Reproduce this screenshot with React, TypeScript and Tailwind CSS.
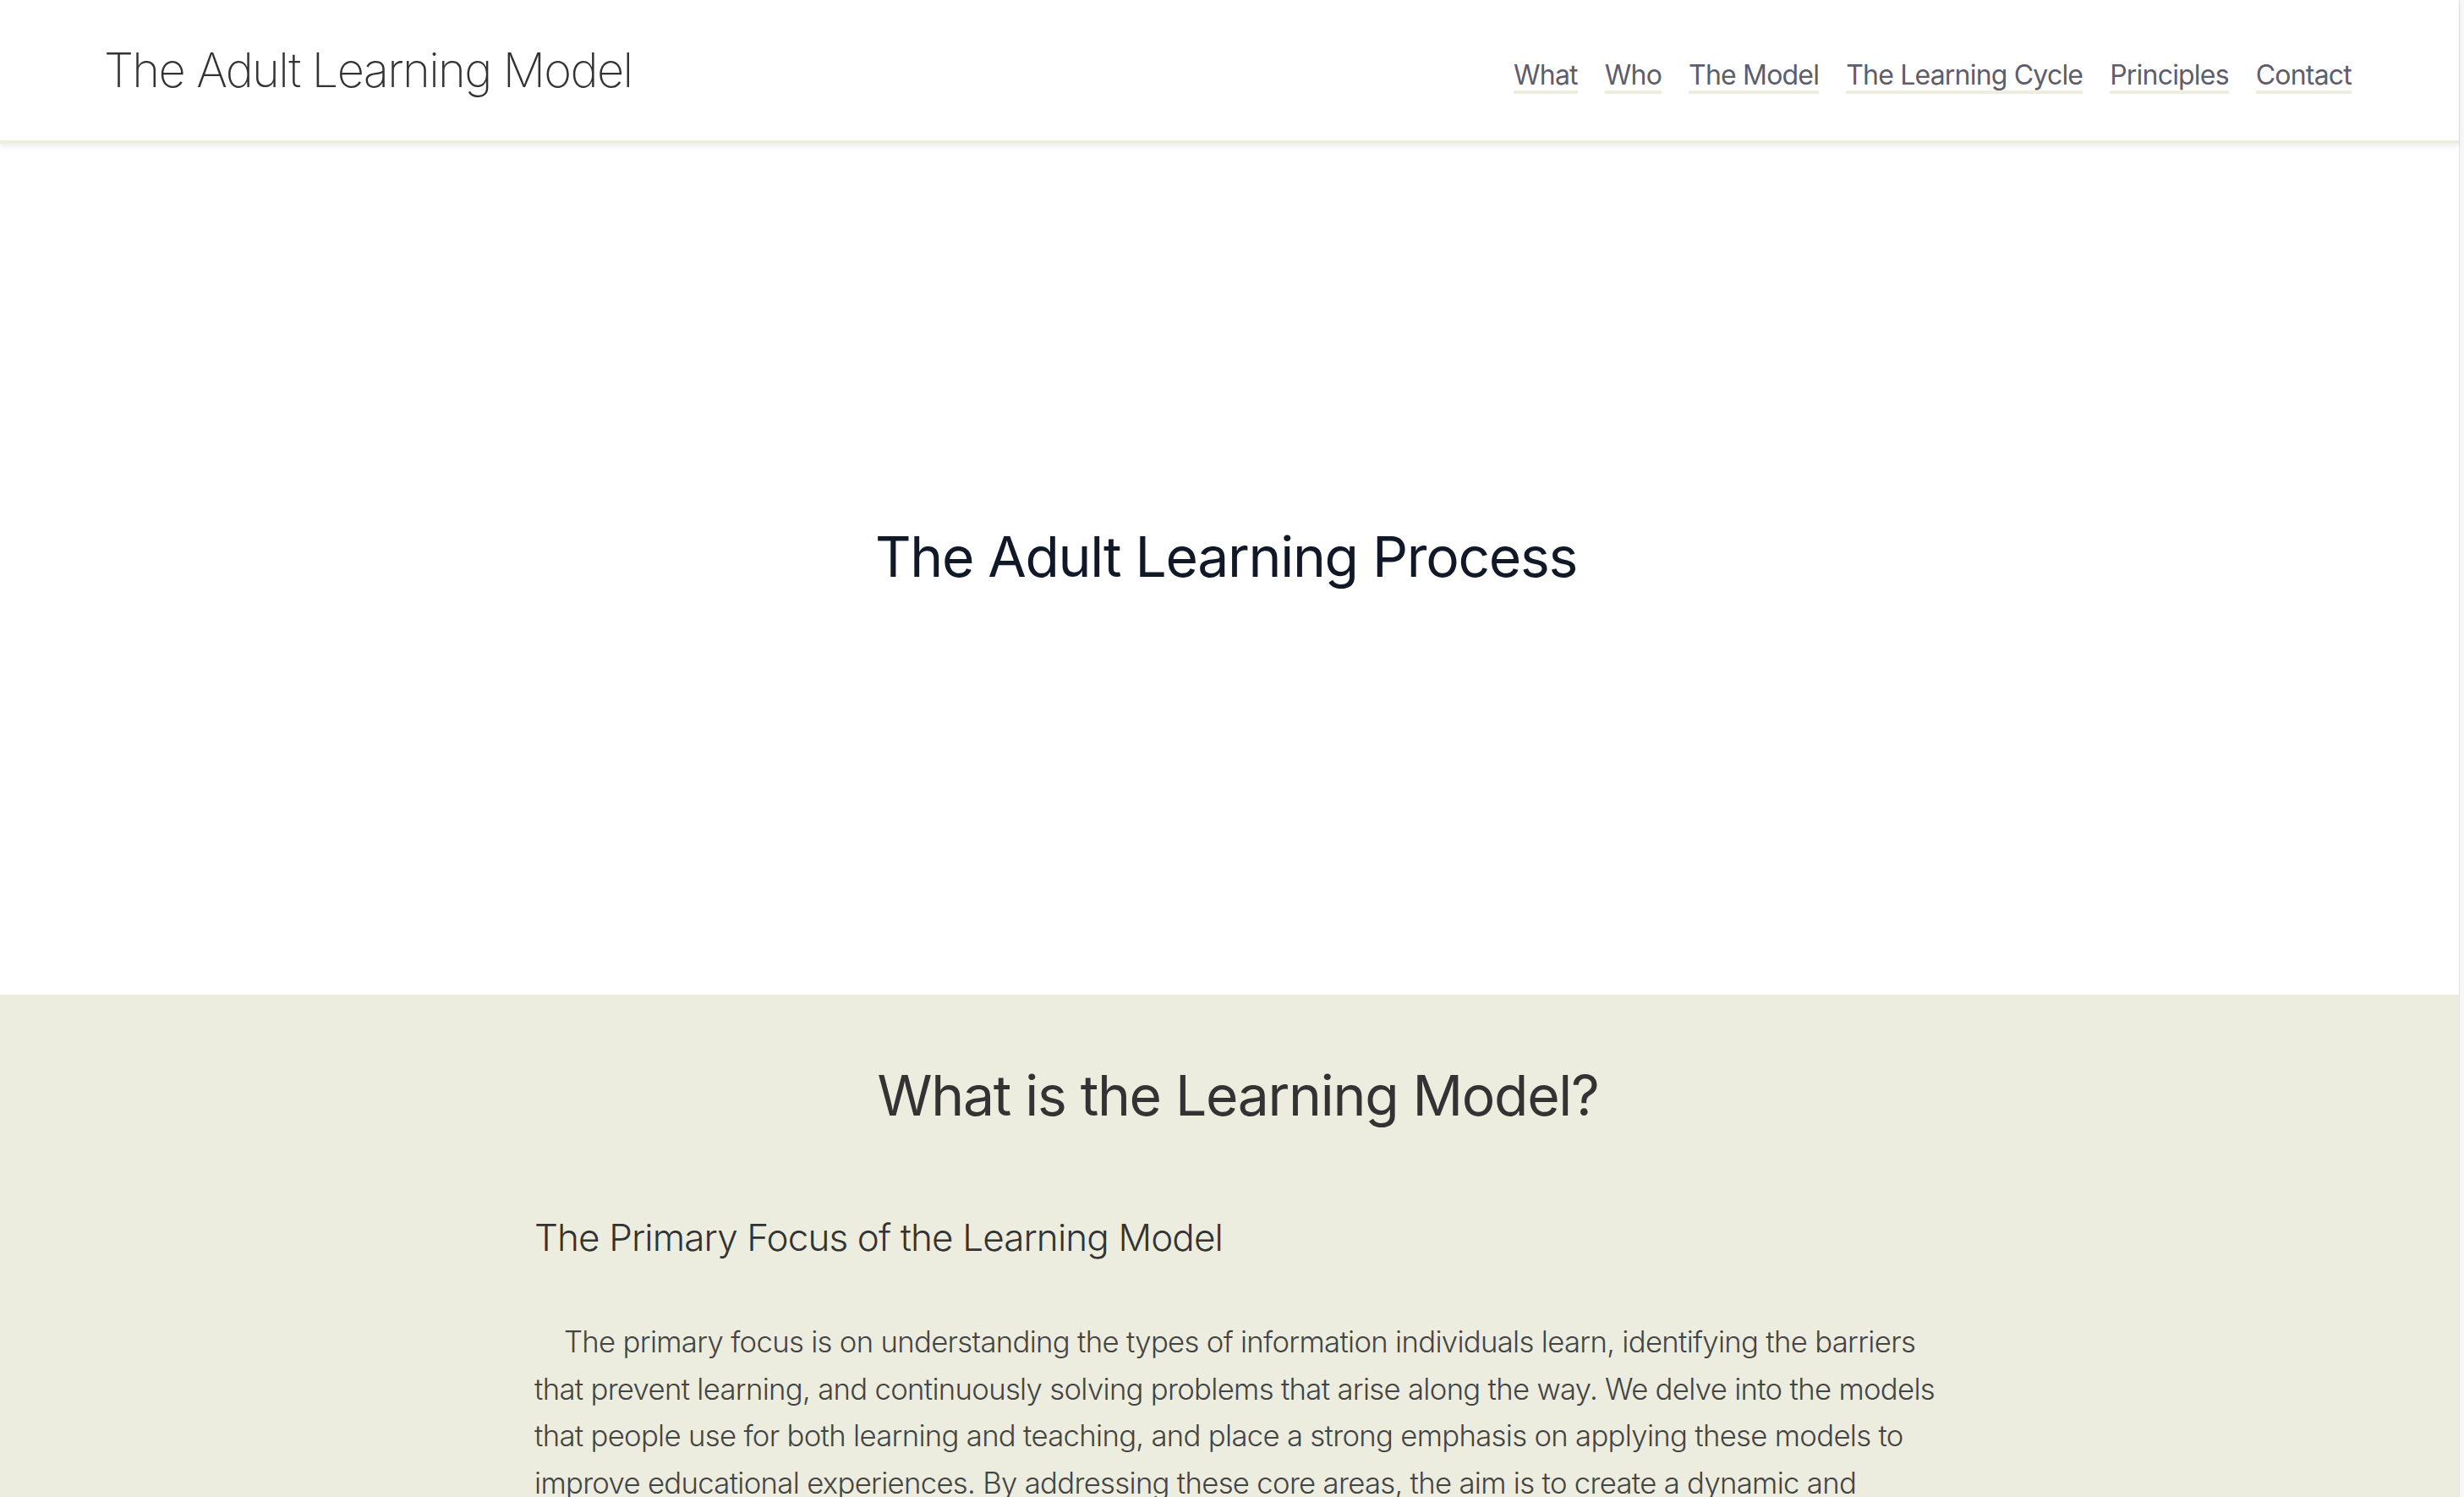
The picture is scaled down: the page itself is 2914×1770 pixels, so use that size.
import React from "react";

const navItems = ["What", "Who", "The Model", "The Learning Cycle", "Principles", "Contact"];

export default function App() {
  return (
    <div className="flex h-[1770px] w-full overflow-hidden bg-white" style={{ fontFamily: "Inter, 'Noto Sans', sans-serif" }}>
      <div className="flex min-w-0 flex-1 flex-col">
        <header className="relative z-10 flex h-[170px] shrink-0 items-center justify-between border-b-4 border-[#ecedde] bg-white pl-[123px] pr-[127px] shadow-[0_4px_6px_rgba(0,0,0,0.06)]">
          <h1 className="text-[56px] font-extralight tracking-[-0.03em] text-[#333333]">The Adult Learning Model</h1>
          <nav className="mt-[16px] flex items-center gap-[32px]">
            {navItems.map((item) => (
              <a
                key={item}
                href="#"
                className="border-b-[4px] border-[#ecedde] text-[32px] font-normal leading-[1.15] tracking-[-0.025em] text-[#5e5d6c]"
              >
                {item}
              </a>
            ))}
          </nav>
        </header>
        <section className="flex h-[1006px] shrink-0 items-center justify-center bg-white pb-[30px] pr-[8px]">
          <h2 className="text-[66px] font-normal tracking-[-0.02em] text-[#111827]">The Adult Learning Process</h2>
        </section>
        <section className="flex-1 bg-[#ecedde]">
          <div className="ml-[632px] w-[1664px] pt-[70px]">
            <h2 className="text-center text-[66px] font-normal tracking-[-0.02em] text-[#333333]">What is the Learning Model?</h2>
            <h3 className="mt-[85px] text-[44px] font-light tracking-[-0.02em] text-[#333333]">The Primary Focus of the Learning Model</h3>
            <p className="mt-[63px] indent-[35px] text-[34.7px] font-light leading-[1.605] tracking-[-0.02em] text-[#444444]">
              The primary focus is on understanding the types of information individuals learn, identifying the barriers that prevent learning, and continuously solving problems that arise along the way. We delve into the models that people use for both learning and teaching, and place a strong emphasis on applying these models to improve educational experiences. By addressing these core areas, the aim is to create a dynamic and effective learning environment that supports growth at every stage.
            </p>
          </div>
        </section>
      </div>
      <div className="w-[6px] shrink-0 border-l border-[#e3e3e3] bg-[#f7f7f7]" />
    </div>
  );
}
